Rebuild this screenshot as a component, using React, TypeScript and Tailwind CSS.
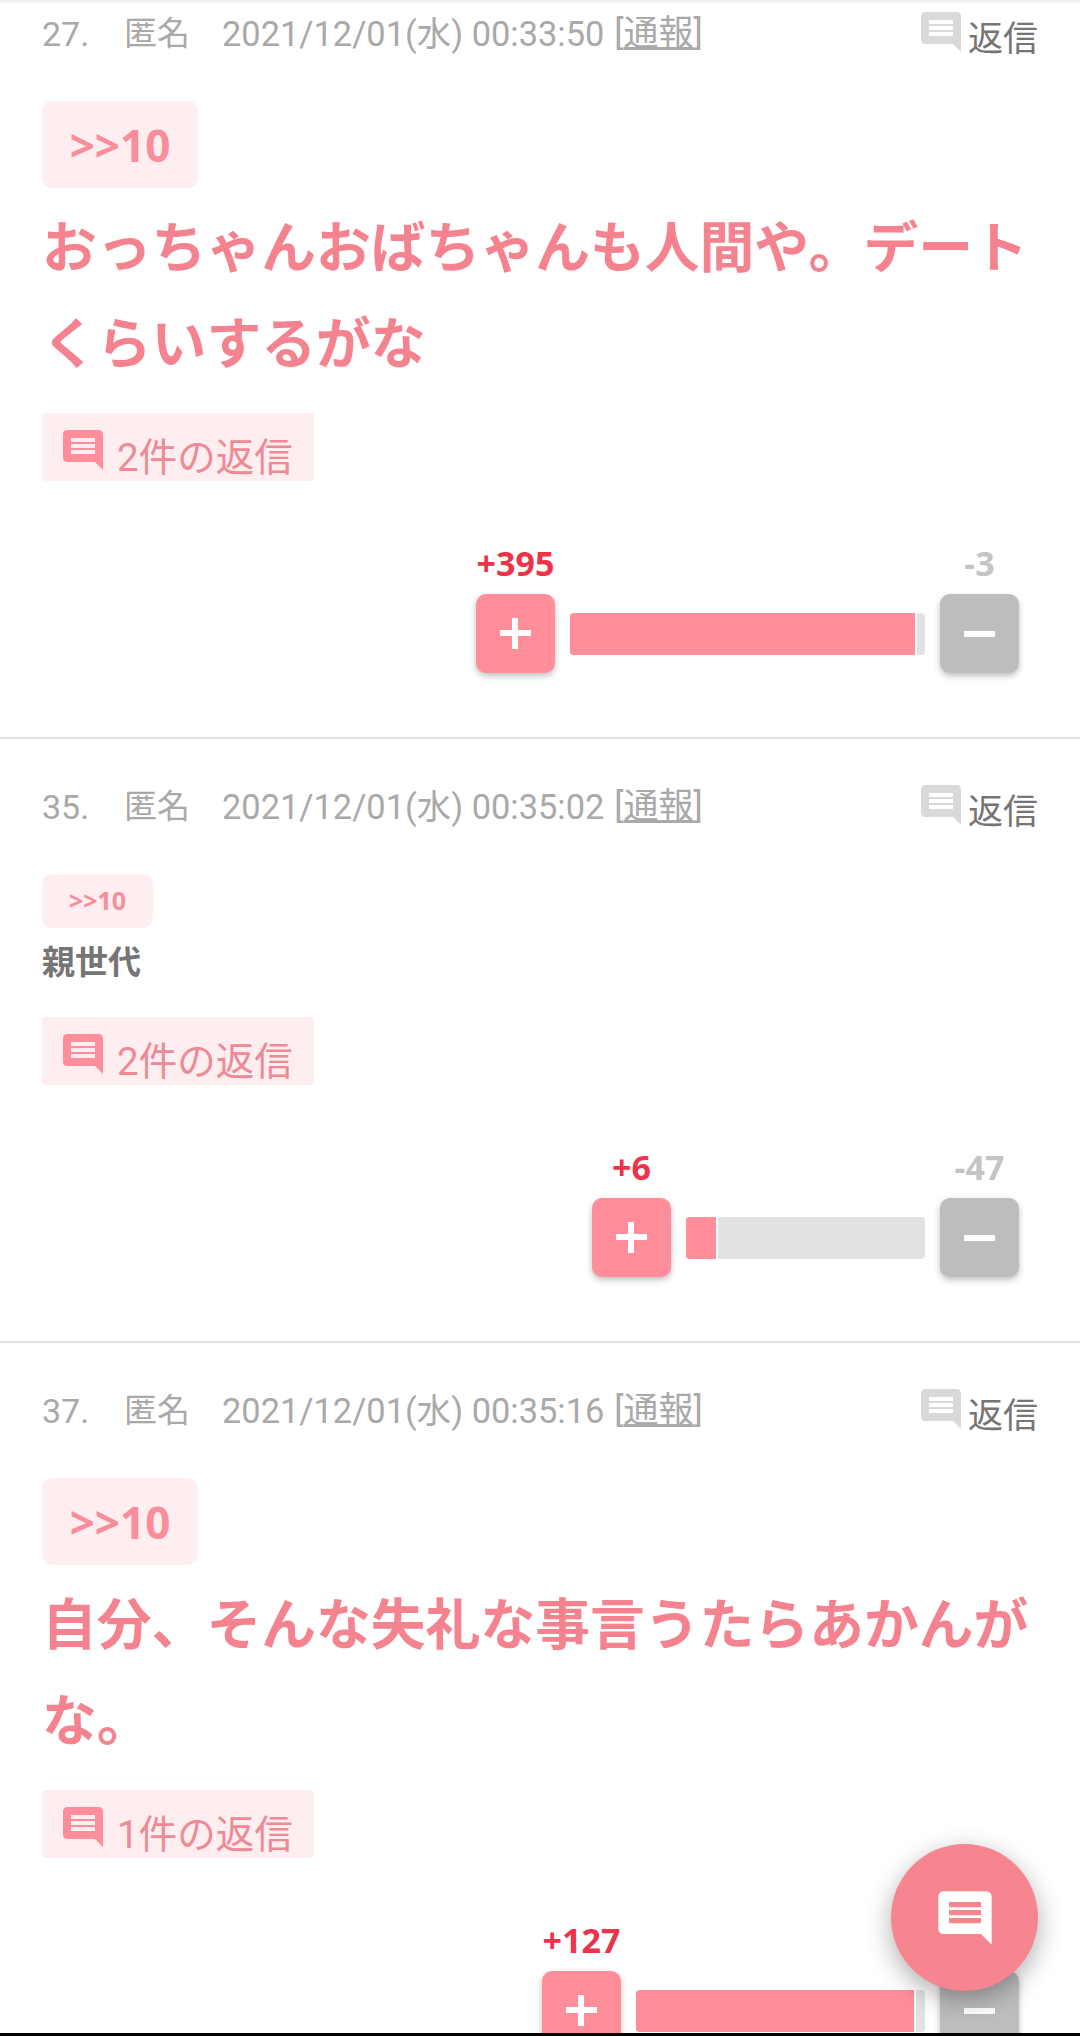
import { MdMessage } from 'react-icons/md'

const cjk = { fontFamily: 'Roboto, "Noto Sans CJK JP", sans-serif' }
const noto = { fontFamily: '"Noto Sans", "Noto Sans CJK JP", sans-serif' }

interface PostProps {
  no: number
  time: string
  title: string
  big?: boolean
  replies: number
  plus: number
  minus: number
  barClass: string
  fillClass: string
}

function Post({ no, time, title, big, replies, plus, minus, barClass, fillClass }: PostProps) {
  return (
    <section className="border-b-[2px] border-[#e2e2e2] px-[42px] pt-[48px] pb-[64px]">
      {/* ヘッダー */}
      <div className="relative flex h-[40px] items-center text-[34px] leading-[40px] text-[#a9a9a9]">
        <span className="w-[82px]">{no}.</span>
        <span className="w-[98px] text-[33px]">匿名</span>
        <span className="whitespace-nowrap text-[34.4px]">{time}</span>
        <span className="ml-[10px] whitespace-nowrap text-[35px]">
          [<span className="underline">通報</span>]
        </span>
        <div className="ml-auto flex items-start">
          <MdMessage className="-scale-x-100 mr-[3px] text-[#d9d9d9]" size={48} />
          <span className="mt-[12px] text-[35px] leading-[40px] text-[#757575]">返信</span>
        </div>
      </div>

      {/* 本文 */}
      {big ? (
        <>
          <div className="mt-[47px] flex h-[87px] w-[156px] items-center justify-center rounded-[10px] bg-[#ffeef0] text-[44px] font-bold text-[#f98d99]" style={noto}>
            &gt;&gt;10
          </div>
          <p className="mt-[12px] mb-[21px] text-[54.8px] font-bold leading-[96px] text-[#f4838f]">{title}</p>
        </>
      ) : (
        <>
          <div className="mt-[47px] flex h-[54px] w-[111px] items-center justify-center rounded-[10px] bg-[#ffeef0] text-[25px] font-bold text-[#f98d99]" style={noto}>
            &gt;&gt;10
          </div>
          <p className="mt-[8px] mb-[27px] text-[33px] font-bold leading-[54px] text-[#757575]">{title}</p>
        </>
      )}

      {/* 返信数 */}
      <div className="flex h-[68px] w-[272px] items-start rounded-[4px] bg-[#ffeef0] pl-[17px] text-[38.5px] text-[#ee8a96]">
        <MdMessage className="-scale-x-100 mt-[13px] text-[#ff8e9a]" size={48} />
        <span className="ml-[10px] mt-[19px] leading-[52px]">{replies}件の返信</span>
      </div>

      {/* 投票 */}
      <div className="mt-[62px] mr-[19px] flex justify-end gap-[15px]">
        <div className="flex w-[79px] flex-col items-center">
          <span className="h-[40px] whitespace-nowrap text-[34px] font-bold leading-[40px] text-[#ec3349]" style={noto}>
            +{plus}
          </span>
          <button className="mt-[11px] flex h-[79px] w-[79px] items-center justify-center rounded-[10px] bg-[#ff8e9a] shadow-[0_3px_6px_rgba(0,0,0,0.25)]">
            <span className="relative block h-[31px] w-[31px]">
              <span className="absolute left-0 top-[12px] h-[6px] w-[31px] bg-white" />
              <span className="absolute left-[12px] top-0 h-[31px] w-[6px] bg-white" />
            </span>
          </button>
        </div>
        <div className={`mt-[70px] flex h-[42px] overflow-hidden rounded-[4px] bg-[#e2e2e2] ${barClass}`}>
          <div className={`h-full border-r-[2px] border-white bg-[#ff8e9a] ${fillClass}`} />
        </div>
        <div className="flex w-[79px] flex-col items-center">
          <span className="h-[40px] whitespace-nowrap text-[34px] font-bold leading-[40px] text-[#c4c4c4]" style={noto}>
            -{minus}
          </span>
          <button className="mt-[11px] flex h-[79px] w-[79px] items-center justify-center rounded-[10px] bg-[#bdbdbd] shadow-[0_3px_6px_rgba(0,0,0,0.25)]">
            <span className="block h-[6px] w-[31px] bg-white" />
          </button>
        </div>
      </div>
    </section>
  )
}

export default function App() {
  return (
    <div className="relative h-[2036px] w-[1080px] overflow-hidden bg-white" style={cjk}>
      <div className="mt-[-34px]">
        <Post
          no={27}
          time="2021/12/01(水) 00:33:50"
          title="おっちゃんおばちゃんも人間や。デートくらいするがな"
          big
          replies={2}
          plus={395}
          minus={3}
          barClass="w-[355px]"
          fillClass="w-[347px]"
        />
        <Post
          no={35}
          time="2021/12/01(水) 00:35:02"
          title="親世代"
          replies={2}
          plus={6}
          minus={47}
          barClass="w-[239px]"
          fillClass="w-[32px]"
        />
        <Post
          no={37}
          time="2021/12/01(水) 00:35:16"
          title="自分、そんな失礼な事言うたらあかんがな。"
          big
          replies={1}
          plus={127}
          minus={4}
          barClass="w-[289px]"
          fillClass="w-[280px]"
        />
      </div>

      {/* 上端の影 */}
      <div className="absolute inset-x-0 top-0 h-[4px] bg-gradient-to-b from-[#ececec] to-white" />

      {/* コメントボタン */}
      <button className="absolute left-[891px] top-[1844px] flex h-[147px] w-[147px] items-center justify-center rounded-full bg-[#f6858f] shadow-[0_8px_26px_rgba(0,0,0,0.32)]">
        <MdMessage className="-scale-x-100 text-white" size={64} />
      </button>

      {/* 下端のバー */}
      <div className="absolute inset-x-0 bottom-0 h-[3px] bg-black" />
    </div>
  )
}
